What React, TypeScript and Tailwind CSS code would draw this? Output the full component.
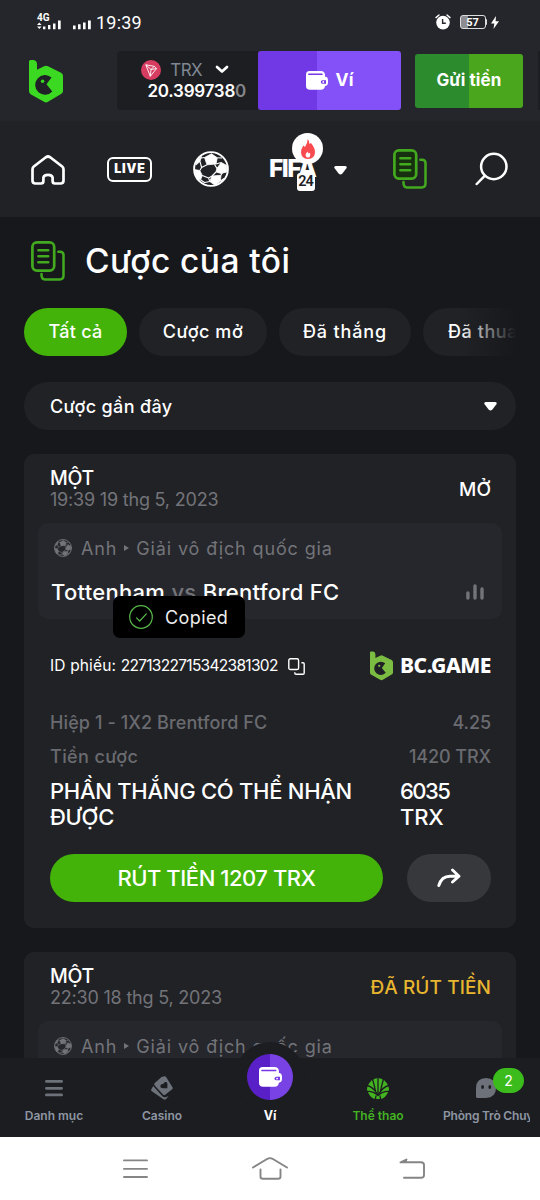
import type { ReactNode } from "react";

function BrandMark({ className }: { className?: string }) {
  return (
    <svg viewBox="0 0 34 43" className={className}>
      <path
        fill="currentColor"
        d="M0 1.5Q0 0 1.5 0H4.5Q7.8.4 8 4V9.8L15 6.2Q17 5.2 19 6.2L32 12.8Q34 13.8 34 16V31Q34 33 32 34L19 41.8Q17 43 15 41.8L2 34.6Q0 33.4 0 31Z"
      />
      <path className="fill-[#202126]" d="M17.5 24.3L22.5 17.6A9.8 9.8 0 1 0 23.3 31.4Z" />
      <circle cx="13.6" cy="21.2" r="1.7" fill="currentColor" />
    </svg>
  );
}

function SoccerBall({ className }: { className?: string }) {
  return (
    <svg viewBox="0 0 36 36" className={className} fill="none" stroke="currentColor" strokeLinejoin="round">
      <circle cx="18" cy="18" r="16.9" strokeWidth="1.9" />
      <g fill="currentColor" strokeWidth="0.8">
        <path d="M11.5 6.5L18.5 2.8L24.3 6.8L23 13L14 13.8Z" />
        <path d="M28.3 11.5L33.8 14.5V21L28 22.4L23 21L23.8 17.5Z" />
        <path d="M1.4 18.5L6.8 19.5L9.3 24.5L7.5 28.8L4.4 29Z" />
        <path d="M19 25L28 24.3L27.3 30.2L22 34.2L16.8 30.5Z" />
        <path d="M4 9L8.5 5.5L7 10.5L3 14Z" />
      </g>
      <path
        strokeWidth="1.1"
        d="M11.5 6.5L8 7M14 13.8L8.6 16.5L6.8 19.5M23 13L28.3 11.5M24.3 6.8L29 7M24 17.5L21.5 13.4M9.3 24.5L15.6 27L19 25L23 21M16.8 30.5L11.5 31.5L7.5 28.8M28 24.3L29.5 21.5M27.3 30.2L31 27.5M8.6 16.5L7 10.5M15.6 27L16.8 30.5"
      />
    </svg>
  );
}

function DocsIcon({ className, sheet = "none" }: { className?: string; sheet?: string }) {
  return (
    <svg viewBox="0 0 34 40" className={className} fill="none" stroke="currentColor" strokeLinecap="round" strokeLinejoin="round">
      <rect x="1.4" y="1.4" width="21.8" height="28.2" rx="4.5" strokeWidth="2.7" fill={sheet} />
      <path strokeWidth="2.5" d="M27.3 10.7H29Q32.5 10.7 32.5 14V34.3Q32.5 38.4 28.8 38.4H14Q10.5 38.4 10.5 34V33" />
      <path strokeWidth="2.6" d="M7.4 9.3H17.2M7.4 15.3H17.2M7.4 21.3H17.2" />
    </svg>
  );
}

function WalletIcon({ className }: { className?: string }) {
  return (
    <svg viewBox="0 0 22 19" className={className}>
      <path fill="currentColor" d="M3.5 0H15Q18.5 0 19 3.5V5.7H20Q22 6.2 22 9V11.5Q22 14.7 19 15Q18.5 18.8 15 18.8H4Q0 18.8 0 15V3.5Q0 0 3.5 0Z" />
      <path className="stroke-[#7637e6]" strokeWidth="1.5" strokeLinecap="round" d="M2.8 3.3H16" />
      <path className="fill-[#7637e6]" d="M16.5 9.2H20V12.7H16.5Q14.8 12.5 14.8 11T16.5 9.2Z" />
      <circle cx="17.3" cy="11" r="0.9" fill="currentColor" />
    </svg>
  );
}

function Caret({ className }: { className?: string }) {
  return (
    <svg viewBox="0 0 13 9" className={className} fill="currentColor">
      <path d="M1.6 0H11.4Q13.2.4 12.6 2L8.2 7.8Q6.5 9.4 4.8 7.8L.4 2Q-.2.4 1.6 0Z" />
    </svg>
  );
}

function StatusBar() {
  return (
    <div className="flex h-11 items-center pl-[37px] pr-[41px] font-['Roboto'] text-white">
      <svg viewBox="0 0 25 16" className="h-4 w-[25px] overflow-visible" fill="currentColor">
        <text x="0" y="6.6" fontSize="10" fontWeight="700">4G</text>
        <path d="M0 11L2.3 8.5L4.6 11ZM0 12.5L2.3 15L4.6 12.5ZM6 12.6H8.4V15.2H6ZM11 11H13.4V15.2H11ZM16 9.5H18.5V15.2H16ZM21 6.5H23.7V15.2H21Z" />
      </svg>
      <svg viewBox="0 0 18 16" className="ml-[11px] h-4 w-[18px]" fill="currentColor">
        <path d="M0 11.4H2.6V15.2H0ZM5 10.3H7.6V15.2H5ZM10 8.5H12.6V15.2H10ZM15 6.5H17.8V15.2H15Z" />
      </svg>
      <span className="ml-[5px] text-[18px] tracking-[0.2px]">19:39</span>
      <svg viewBox="0 0 16 16" className="ml-auto h-4 w-4">
        <circle cx="8" cy="8.6" r="6.8" fill="#fff" />
        <path d="M1 3.6L4 1M15 3.6L12 1" stroke="#fff" strokeWidth="1.4" strokeLinecap="round" />
        <path d="M7.6 5V9.2H10.8" stroke="#25262b" strokeWidth="1.4" fill="none" />
      </svg>
      <div className="ml-[9px] flex h-[14px] w-[26px] items-center justify-center overflow-hidden rounded-[3px] border border-[#ddd] bg-[linear-gradient(90deg,#8d8d91_30%,#25262b_30%)] text-[11px] font-bold leading-none">
        57
      </div>
      <div className="h-1.5 w-[1.5px] rounded-r bg-[#ddd]" />
      <svg viewBox="0 0 8 13" className="ml-1 h-[13px] w-2" fill="currentColor">
        <path d="M5 0L0 7.4H3.3L2.5 13L8 5.2H4.6Z" />
      </svg>
    </div>
  );
}

function Header() {
  return (
    <header className="h-[121px] shrink-0 bg-[#25262b] text-white">
      <StatusBar />
      <div className="mt-[7px] flex h-[59px] items-center">
        <BrandMark className="ml-[29px] mt-0.5 h-[43px] w-[34px] text-[#3bd921]" />
        <div className="ml-[54px] flex h-[59px] w-[141px] flex-col items-end justify-center rounded-l bg-[#1d1e22]">
          <div className="mr-[35px] flex h-5 items-center">
            <svg viewBox="0 0 20 20" className="h-5 w-5">
              <circle cx="10" cy="10" r="10" fill="#d63d61" />
              <path d="M4.8 4.8L13.2 6.3L15.5 8.6L9.3 16.3ZM4.8 4.8L10 9.5L15.5 8.6M13.2 6.3L10 9.5L9.3 16.3" fill="none" stroke="#fff" strokeWidth="0.9" strokeLinejoin="round" />
            </svg>
            <span className="ml-[9px] font-['Inter'] text-[17px] leading-5 tracking-[-0.6px] text-[#7f8792]">TRX</span>
            <svg viewBox="0 0 14 9" className="-mr-1.5 ml-[13px] h-[9px] w-[14px]">
              <path d="M2 2L7 6.6L12 2" fill="none" stroke="#fff" strokeWidth="2.7" strokeLinecap="round" strokeLinejoin="round" />
            </svg>
          </div>
          <div className="mr-[12px] font-['Inter'] text-[17px] font-semibold leading-[22px] tracking-[-0.25px]">
            20.399738<span className="text-[#85868a]">0</span>
          </div>
        </div>
        <button className="flex h-[59px] w-[143px] items-center justify-center rounded-[3px] bg-[linear-gradient(90deg,#7138e6_41%,#8450f8_41%)] font-['Inter'] text-[17.5px] font-bold">
          <WalletIcon className="mr-2 h-[19px] w-[22px]" />
          Ví
        </button>
        <button className="ml-[14px] h-[54px] w-[108px] rounded-[3px] bg-[linear-gradient(90deg,#2b8b2d_50%,#4aa61c_50%)] font-['Inter'] text-[17px] font-bold tracking-[0.1px]">
          Gửi tiền
        </button>
        <div className="ml-auto h-[59px] w-0.5 bg-[#1d1e22]" />
      </div>
    </header>
  );
}

function SportNav() {
  return (
    <nav className="flex h-24 shrink-0 items-center bg-[#212226] text-white">
      <svg viewBox="0 0 34 30" className="ml-[31px] mt-0.5 h-[30px] w-[34px]" fill="none" stroke="currentColor" strokeWidth="2.7" strokeLinejoin="round">
        <path d="M1.5 14.2Q1.5 12.6 2.8 11.5L14.8 2.3Q17 .7 19.2 2.3L31.2 11.5Q32.5 12.6 32.5 14.2V25.5Q32.5 28.5 29.5 28.5H24Q21.6 28.5 21.6 26V22.5Q21.2 19.8 17 19.8Q12.8 19.8 12.4 22.5V26Q12.4 28.5 10 28.5H4.5Q1.5 28.5 1.5 25.5Z" />
      </svg>
      <div className="ml-[42px] flex h-[25px] w-[45px] items-center justify-center rounded-[6px] border-[2.5px] border-white pl-px font-['Inter'] text-[12.5px] font-black leading-none tracking-[0.8px]">
        LIVE
      </div>
      <SoccerBall className="ml-[41px] h-9 w-9" />
      <div className="relative ml-[40px] h-12 w-[48px]">
        <span className="absolute left-0 top-[9px] font-['Inter'] text-[24.5px] font-extrabold leading-[28px] tracking-[-1.5px]">FIFA</span>
        <span className="absolute left-[28px] top-[28px] flex h-[18px] w-[18px] items-center justify-center rounded-[3px] bg-white pr-px font-['Roboto'] text-[14.5px] font-semibold leading-none tracking-[-1px] text-[#202125]">24</span>
        <span className="absolute -top-[12px] left-[23px] flex h-[31px] w-[31px] items-center justify-center rounded-full bg-white">
          <svg viewBox="0 0 14 20" className="h-5 w-[14px]">
            <path fill="#f84b50" d="M6.8 0Q8.5 2.3 8.5 5L10 4Q14 9 14 13Q14 19.5 7 20Q0 19.5 0 13Q0 10 2.4 6.6L4 8Q6.5 4.2 6.8 0Z" />
            <path fill="#fff" d="M6.7 12.5L7.5 14.5L9 13.8Q10 18.5 7 18.5Q4 18 4.8 14.7Z" />
          </svg>
        </span>
      </div>
      <Caret className="ml-[17px] mt-0.5 h-[9px] w-[13px]" />
      <DocsIcon className="ml-[46px] h-10 w-[34px] text-[#43a91f]" sheet="#17300f" />
      <svg viewBox="0 0 33 34" className="ml-[48px] h-[34px] w-[33px]" fill="none" stroke="currentColor" strokeWidth="2.5" strokeLinecap="round">
        <circle cx="18.8" cy="14.5" r="12.7" />
        <path d="M9.7 23.8L1.7 32" />
      </svg>
    </nav>
  );
}

function Filters() {
  const pill = "flex h-12 shrink-0 items-center justify-center rounded-full pb-0.5 text-[18px] font-medium";
  return (
    <div className="relative mt-[26px] flex shrink-0 gap-3 overflow-hidden">
      <span className={`${pill} w-[103px] bg-[#43b309] tracking-[0.3px]`}>Tất cả</span>
      <span className={`${pill} w-[128px] bg-[#212226] tracking-[0.55px]`}>Cược mở</span>
      <span className={`${pill} w-[132px] bg-[#212226] tracking-[0.85px]`}>Đã thắng</span>
      <span className={`${pill} w-[120px] bg-[#212226] tracking-[0.55px]`}>Đã thua</span>
      <div className="absolute inset-y-0 right-0 w-[58px] bg-[linear-gradient(90deg,transparent,#17181c)]" />
    </div>
  );
}

type TicketProps = { time: string; status: string; statusClass: string; children?: ReactNode };

function Ticket({ time, status, statusClass, children }: TicketProps) {
  return (
    <section className="mt-6 shrink-0 rounded-[10px] bg-[#212226] px-[14px] pt-3">
      <div className="flex h-[57px] items-start justify-between pl-3 pr-[11px]">
        <div>
          <div className="text-[19.5px] font-medium leading-6 tracking-[-0.3px]">MỘT</div>
          <div className="text-[18px] leading-5 tracking-[-0.2px] text-[#737479]">{time}</div>
        </div>
        <div className={`mt-3 text-[19px] font-medium leading-6 ${statusClass}`}>{status}</div>
      </div>
      <div className="h-24 rounded-[10px] bg-[#26272c] px-[14px] pt-[13px]">
        <div className="flex h-6 items-center text-[18px] tracking-[0.87px] text-[#737479]">
          <SoccerBall className="ml-0.5 mr-[9px] h-[18px] w-[18px]" />
          Anh
          <svg viewBox="0 0 5 6" className="mx-[7px] h-1.5 w-[5px]" fill="currentColor"><path d="M0 0L5 3L0 6Z" /></svg>
          Giải vô địch quốc gia
        </div>
        <div className="mt-[20px] flex h-6 items-center justify-between">
          <div className="-ml-px text-[22px] font-medium tracking-[0.3px]">
            Tottenham <span className="text-[#737479]">vs</span> Brentford FC
          </div>
          <svg viewBox="0 0 18 16" className="mr-1 h-4 w-[18px] text-[#737479]" fill="none" stroke="currentColor" strokeWidth="3.4" strokeLinecap="round">
            <path d="M1.9 9V14M9 2V14M16 5V14" />
          </svg>
        </div>
      </div>
      {children}
    </section>
  );
}

function OpenBetDetails() {
  return (
    <div className="pl-3 pr-[11px]">
      <div className="mt-[31px] flex h-8 items-center">
        <span className="whitespace-pre text-[15.5px] tracking-[0.15px]">ID phiếu: </span>
        <span className="text-[15.5px] tracking-[-0.7px]">2271322715342381302</span>
        <svg viewBox="0 0 17 17" className="ml-2.5 h-[17px] w-[17px]" fill="none" stroke="currentColor" strokeWidth="1.4" strokeLinejoin="round">
          <rect x=".8" y=".8" width="9.8" height="10.7" rx="1.6" />
          <path d="M13.4 4.8H15Q16.2 4.8 16.2 6V15Q16.2 16.2 15 16.2H8Q6.8 16.2 6.8 15V14.3" />
        </svg>
        <BrandMark className="ml-auto h-[30px] w-[23px] text-[#7bbd42]" />
        <span className="ml-[7px] font-['Noto_Sans'] text-[21px] font-extrabold tracking-[-0.5px]">BC.GAME</span>
      </div>
      <div className="mt-[27px] flex h-[26px] items-center justify-between text-[18px] font-medium text-[#6a6b70]">
        <span className="tracking-[0.1px]">Hiệp 1 - 1X2 Brentford FC</span>
        <span className="tracking-[-0.1px]">4.25</span>
      </div>
      <div className="mt-2 flex h-[26px] items-center justify-between text-[18px] font-medium text-[#6a6b70]">
        <span className="tracking-[0.4px]">Tiền cược</span>
        <span className="tracking-[-0.1px]">1420 TRX</span>
      </div>
      <div className="mt-[9px] flex text-[22px] font-medium leading-[26px]">
        <div className="w-[350px] whitespace-nowrap tracking-[-0.27px]">PHẦN THẮNG CÓ THỂ NHẬN<br />ĐƯỢC</div>
        <div className="tracking-[-1.5px]">6035<br /><span className="tracking-[-0.2px]">TRX</span></div>
      </div>
      <div className="flex gap-6 pb-[26px] pt-6">
        <button className="h-12 w-[333px] rounded-full bg-[#43b309] text-[22px] font-medium tracking-[-0.45px]">RÚT TIỀN 1207 TRX</button>
        <button className="flex h-12 w-[84px] items-center justify-center rounded-full bg-[#37383b]">
          <svg viewBox="0 0 24 20" className="h-5 w-6" fill="none" stroke="currentColor" strokeWidth="2.9" strokeLinecap="round" strokeLinejoin="round">
            <path d="M1.8 17.5Q4.5 8.2 13 8.2H21.5M15.5 2L22 8.2L15.5 14" />
          </svg>
        </button>
      </div>
    </div>
  );
}

function TabItem({ label, className, children }: { label: string; className: string; children: ReactNode }) {
  return (
    <div className={`flex w-[108px] flex-col items-center pt-[18px] ${className}`}>
      <div className="flex h-6 items-center">{children}</div>
      <span className="mt-[7px] whitespace-nowrap text-[12px] font-semibold leading-[18px]">{label}</span>
    </div>
  );
}

function TabBar() {
  return (
    <nav className="relative flex h-[79px] shrink-0 bg-[#1c1d21] font-['Inter']">
      <TabItem label="Danh mục" className="text-[#8e96a3]">
        <svg viewBox="0 0 18 18" className="h-[18px] w-[18px] text-[#6c717a]" stroke="currentColor" strokeWidth="2.8" strokeLinecap="round">
          <path d="M1.4 2.4H16.6M1.4 9.3H16.6M1.4 15.9H16.6" />
        </svg>
      </TabItem>
      <TabItem label="Casino" className="text-[#8e96a3]">
        <svg viewBox="0 0 22 24" className="h-6 w-[22px] text-[#6c717a]" fill="currentColor">
          <path d="M2.2 10L.3 13.2Q-.2 14.6 1.1 15.6L12.5 23.2Q14 24 15.2 22.9L17.6 20L14.6 21.2Q12.8 21.8 11.4 20.3Z" />
          <path d="M10.5 1L13.2.2Q14.4 0 15.1 1L21.5 11.3Q22.1 12.4 21.2 13.3L14.2 18.8Q13 19.7 12 18.6L3.7 9.5Q2.8 8.2 3.8 7.1Z" />
          <path fill="#1c1d21" d="M13.2 6.4Q16.3 5 16.5 8.2L16.3 12.2L12.2 12.3Q8.2 11.8 9.7 9Q10.8 7.6 12.3 8.3Q12.2 7.2 13.2 6.4Z" />
        </svg>
      </TabItem>
      <div className="relative w-[108px]">
        <div className="absolute -top-[16px] left-[19px] h-[70px] w-[70px] rounded-full bg-[#1c1d21]" />
        <div className="absolute -top-[4px] left-[31px] flex h-[46px] w-[46px] items-center justify-center rounded-full bg-[linear-gradient(90deg,#5a20c8_50%,#7942e5_50%)] text-white">
          <WalletIcon className="h-5 w-[23px]" />
        </div>
        <span className="absolute inset-x-0 top-[49px] text-center text-[12.5px] font-bold leading-[18px] text-white">Ví</span>
      </div>
      <TabItem label="Thể thao" className="text-[#43b321]">
        <svg viewBox="0 0 22 21" className="h-[21px] w-[22px]">
          <path fill="currentColor" d="M4.5 2.5Q11-2.5 17.5 2.5Q22 7 22 12Q19 19.5 15.5 20.5Q11 21.8 6.5 20.5Q3 19.5 0 12Q0 7 4.5 2.5Z" />
          <path fill="none" stroke="#1c1d21" strokeWidth="1.3" d="M11 0V17M5.5 1Q7.5 8 8.6 13.5M16.5 1Q14.5 8 13.4 13.5M0 7.5Q6 9 10 15.5M22 7.5Q16 9 12 15.5M0 13.5Q6 13 11 17.5Q16 13 22 13.5M9 17.5L8.5 21M13 17.5L13.5 21" />
        </svg>
      </TabItem>
      <div className="relative w-[108px] text-[#8e96a3]">
        <div className="flex flex-col items-center pt-[18px]">
          <svg viewBox="0 0 20 20" className="mt-0.5 h-5 w-5">
            <path fill="#6c717a" d="M10 0Q20 .5 20 10T10 20H1.5Q0 20 0 18.5V10Q0 .5 10 0Z" />
            <ellipse cx="6.6" cy="9" rx="1.4" ry="2.1" fill="#1c1d21" />
            <ellipse cx="13.8" cy="9" rx="1.4" ry="2.1" fill="#1c1d21" />
          </svg>
        </div>
        <span className="ml-[11px] mt-[9px] block w-[87px] overflow-hidden whitespace-nowrap text-[12px] font-semibold leading-[18px] tracking-[-0.2px]">Phòng Trò Chuyện</span>
        <span className="absolute left-[61px] top-[10px] flex h-[25px] w-[31px] items-center justify-center rounded-full bg-[#3bbc1c] text-[14px] text-white">2</span>
      </div>
    </nav>
  );
}

function SystemBar() {
  return (
    <div className="flex h-[63px] shrink-0 items-center bg-white text-[#858585]">
      <svg viewBox="0 0 25 20" className="ml-[123px] h-5 w-[25px]" stroke="currentColor" strokeWidth="1.9" strokeLinecap="round">
        <path d="M1 1.4H24M1 9.9H24M1 18H24" />
      </svg>
      <svg viewBox="0 0 36 23" className="ml-[104px] h-[23px] w-9" fill="none" stroke="currentColor" strokeWidth="1.9" strokeLinecap="round" strokeLinejoin="round">
        <path d="M1 10.5L15.5 1.8Q18 .5 20.5 1.8L35 10.5M8.5 12.5V19.5Q8.5 21.8 11 21.8H26Q28.5 21.8 28.5 19.5V12.5" />
      </svg>
      <svg viewBox="0 0 26 21" className="ml-[111px] h-[21px] w-[26px]" fill="none" stroke="currentColor" strokeWidth="1.9" strokeLinecap="round" strokeLinejoin="round">
        <path d="M7.5 1.5L1.5 4.3H22Q25 4.3 25 7V17Q25 19.8 22 19.8H5" />
        <path fill="currentColor" stroke="none" d="M8 .8V5H.5Z" />
      </svg>
    </div>
  );
}

export default function App() {
  return (
    <div className="relative flex h-[1200px] w-[540px] flex-col overflow-hidden bg-[#17181c] font-['Inter',sans-serif] text-white">
      <Header />
      <SportNav />
      <main className="flex min-h-0 flex-1 flex-col overflow-hidden px-6 pt-[23px]">
        <div className="flex h-[42px] shrink-0 items-center">
          <DocsIcon className="ml-[7px] h-10 w-[34px] text-[#43a91f]" />
          <h1 className="ml-5 text-[33.5px] font-medium tracking-[0.45px]">Cược của tôi</h1>
        </div>
        <Filters />
        <div className="mt-[26px] flex h-12 shrink-0 items-center justify-between rounded-full bg-[#212226] pl-[26px] pr-[19px] text-[18px] font-medium tracking-[0.35px]">
          Cược gần đây
          <Caret className="h-[9px] w-[13px]" />
        </div>
        <Ticket time="19:39 19 thg 5, 2023" status="MỞ" statusClass="text-white">
          <OpenBetDetails />
        </Ticket>
        <Ticket time="22:30 18 thg 5, 2023" status="ĐÃ RÚT TIỀN" statusClass="tracking-[0.1px] text-[#e8b62f]" />
      </main>
      <TabBar />
      <SystemBar />

      {/* Copy confirmation */}
      <div className="absolute left-[113px] top-[596px] flex h-[42px] w-[132px] items-center rounded-[7px] bg-black pl-4">
        <svg viewBox="0 0 24 24" className="h-6 w-6" fill="none" stroke="#58b84a" strokeWidth="1.2" strokeLinecap="round" strokeLinejoin="round">
          <circle cx="12" cy="12" r="11.3" />
          <path d="M7.5 12.8L10.7 16L17.3 8.8" />
        </svg>
        <span className="ml-3 text-[18px] tracking-[0.4px] text-[#eee]">Copied</span>
      </div>
    </div>
  );
}
